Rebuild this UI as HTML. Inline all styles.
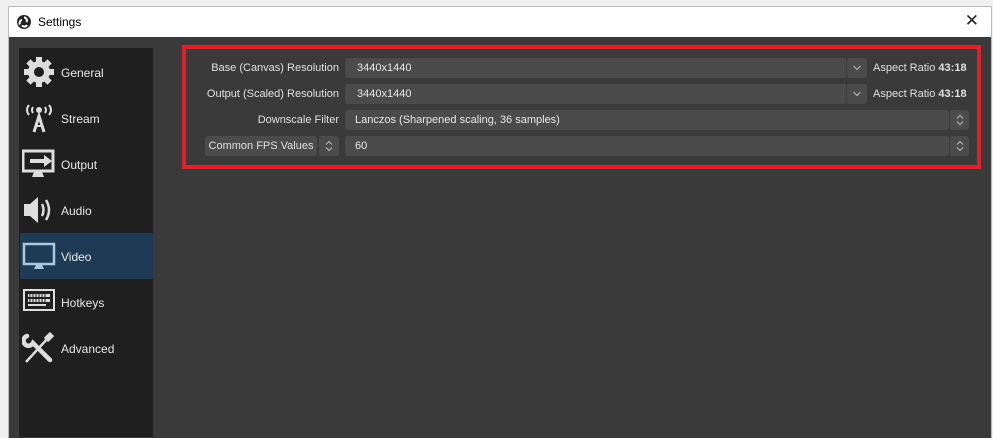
<!DOCTYPE html>
<html><head><style>
body{margin:0;width:993px;height:437px;background:#f0f0f0;font-family:"Liberation Sans",sans-serif;overflow:hidden;position:relative}
.win{position:absolute;left:8px;top:6px;width:982px;height:431px;background:#3a3a3a;border:1px solid #bbb;border-bottom:none}
.title{position:absolute;left:0;top:0;right:0;height:30px;background:#fff;color:#000;font-size:12px}
.side{position:absolute;left:19px;top:48px;width:134px;height:389px;background:#1f1f1f}
.it{position:absolute;left:1px;width:133px;height:46px;color:#e8e8e8;font-size:12px}
.it span{position:absolute;left:41px;top:17px}
.it svg{position:absolute;left:2px;top:7px}
.red{position:absolute;left:182px;top:45px;width:791px;height:116px;border:4px solid #e0202a}
.lab{position:absolute;color:#e0e0e0;font-size:11px;text-align:right;width:160px;left:179px}
.f{position:absolute;left:345px;height:20px;background:#4b4b4b;border-radius:3px;color:#e8e8e8;font-size:11px;line-height:20px;padding-left:12px;box-sizing:border-box}
.btn{position:absolute;height:20px;background:#4b4b4b;border-radius:3px;color:#bbb;font-size:11px;text-align:center;line-height:20px;border-left:1px solid #3a3a3a}
.btn svg{position:absolute;left:50%;top:50%;transform:translate(-50%,-50%)}
.ar{position:absolute;left:873px;color:#e0e0e0;font-size:11px}
</style></head><body>
<div class="win">
<div class="title">
<svg style="position:absolute;left:8px;top:8px" width="14" height="14" viewBox="0 0 14 14"><circle cx="7" cy="7" r="7" fill="#222"/><path d="M7 2.5a3 3 0 0 1 2.5 4.5M3 9.5a3 3 0 0 1 2-4.5M10 10a3 3 0 0 1-5 .5" stroke="#fff" stroke-width="2" fill="none"/></svg>
<span style="position:absolute;left:29px;top:8px">Settings</span>
<span style="position:absolute;right:12px;top:4px;font-size:17px;color:#222">✕</span>
</div>
</div>
<div class="side">
<div class="it" style="top:1px"><svg width="34" height="32" viewBox="0 0 34 32"><g fill="#ddd"><circle cx="17" cy="16" r="11"/><rect x="14" y="1" width="6" height="30"/><rect x="2" y="13" width="30" height="6"/><rect x="14" y="1" width="6" height="30" transform="rotate(45 17 16)"/><rect x="14" y="1" width="6" height="30" transform="rotate(-45 17 16)"/></g><circle cx="17" cy="16" r="5" fill="#1f1f1f"/></svg><span>General</span></div>
<div class="it" style="top:47px"><svg width="34" height="32" viewBox="0 0 34 32"><g fill="none" stroke="#ddd" stroke-width="2"><path d="M7 3Q3 8 7 13M11 5Q9 8 11 11M27 3Q31 8 27 13M23 5Q25 8 23 11"/></g><circle cx="17" cy="8" r="3" fill="#ddd"/><path d="M12 30L17 14L22 30" stroke="#ddd" stroke-width="3" fill="none"/><path d="M14 24H20" stroke="#ddd" stroke-width="2"/></svg><span>Stream</span></div>
<div class="it" style="top:93px"><svg width="34" height="32" viewBox="0 0 34 32"><rect x="1" y="3" width="30" height="20" fill="none" stroke="#ddd" stroke-width="3"/><path d="M10 29h12l-2-5h-8z" fill="#ddd"/><path d="M8 13h16" stroke="#ddd" stroke-width="4"/><path d="M22 7l8 6-8 6z" fill="#ddd"/></svg><span>Output</span></div>
<div class="it" style="top:139px"><svg width="34" height="32" viewBox="0 0 34 32"><path d="M2 10h6l8-7v26l-8-7H2z" fill="#ddd"/><path d="M20 10q3 6 0 12M24 6q6 10 0 20" stroke="#ddd" stroke-width="2.5" fill="none"/></svg><span>Audio</span></div>
<div class="it" style="top:185px;background:#1f3a55"><svg width="34" height="32" viewBox="0 0 34 32"><rect x="2" y="4" width="30" height="20" fill="none" stroke="#a8c8e4" stroke-width="2.5"/><path d="M12 29h10l-2-4h-6z" fill="#a8c8e4"/></svg><span>Video</span></div>
<div class="it" style="top:231px"><svg width="34" height="32" viewBox="0 0 34 32"><rect x="2" y="4" width="30" height="20" fill="none" stroke="#ddd" stroke-width="2"/><g fill="#ddd"><rect x="6" y="8" width="22" height="3"/><rect x="6" y="13" width="22" height="3"/><rect x="6" y="18" width="18" height="2"/></g><path d="M8 8v8M11 8v8M14 8v8M17 8v8M20 8v8M23 8v8" stroke="#1f1f1f" stroke-width="1"/></svg><span>Hotkeys</span></div>
<div class="it" style="top:277px"><svg width="34" height="32" viewBox="0 0 34 32"><path d="M4 30L26 6" stroke="#ddd" stroke-width="2.5"/><path d="M30 2l-6 6" stroke="#ddd" stroke-width="6"/><path d="M5 4a5 5 0 1 0 6 7L28 28" stroke="#ddd" stroke-width="4.5" fill="none" stroke-linecap="round"/></svg><span>Advanced</span></div>
</div>
<div class="red"></div>
<div class="lab" style="top:62px">Base (Canvas) Resolution</div>
<div class="lab" style="top:88px">Output (Scaled) Resolution</div>
<div class="lab" style="top:114px">Downscale Filter</div>
<div class="f" style="top:58px;width:502px">3440x1440</div><div class="btn" style="left:846px;top:58px;width:20px"><svg width="8" height="5" viewBox="0 0 8 5"><path d="M.5.5L4 4 7.5.5" stroke="#bbb" fill="none"/></svg></div>
<div class="f" style="top:84px;width:502px">3440x1440</div><div class="btn" style="left:846px;top:84px;width:20px"><svg width="8" height="5" viewBox="0 0 8 5"><path d="M.5.5L4 4 7.5.5" stroke="#bbb" fill="none"/></svg></div>
<div class="ar" style="top:62px">Aspect Ratio <b>43:18</b></div>
<div class="ar" style="top:88px">Aspect Ratio <b>43:18</b></div>
<div class="f" style="top:110px;width:604px;padding-left:10px">Lanczos (Sharpened scaling, 36 samples)</div><div class="btn" style="left:949px;top:110px;width:19px"><svg width="8" height="12" viewBox="0 0 8 12"><path d="M1 4.5L4 1.5 7 4.5M1 7.5L4 10.5 7 7.5" stroke="#bbb" fill="none"/></svg></div>
<div class="btn" style="left:205px;top:136px;width:112px;color:#e0e0e0;border:none">Common FPS Values</div><div class="btn" style="left:318px;top:136px;width:20px"><svg width="8" height="12" viewBox="0 0 8 12"><path d="M1 4.5L4 1.5 7 4.5M1 7.5L4 10.5 7 7.5" stroke="#bbb" fill="none"/></svg></div>
<div class="f" style="top:136px;width:604px;padding-left:10px">60</div><div class="btn" style="left:949px;top:136px;width:19px"><svg width="8" height="12" viewBox="0 0 8 12"><path d="M1 4.5L4 1.5 7 4.5M1 7.5L4 10.5 7 7.5" stroke="#bbb" fill="none"/></svg></div>
</body></html>
